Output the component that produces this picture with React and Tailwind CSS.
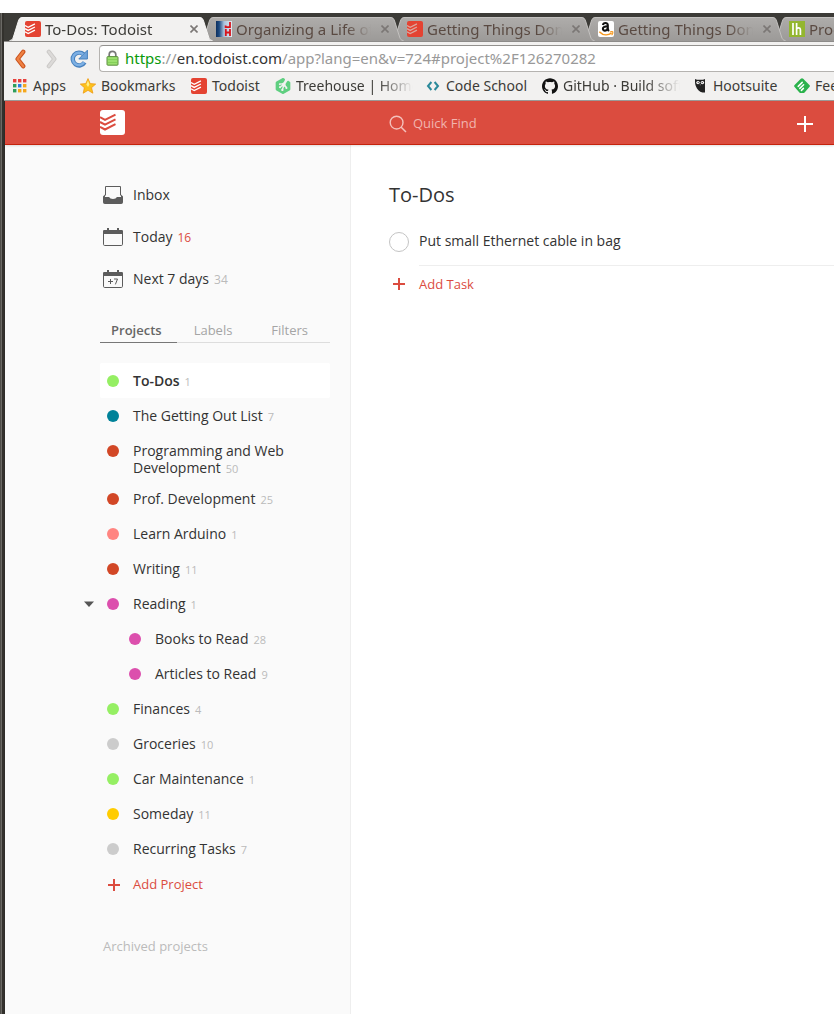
import { SiGithub, SiTreehouse } from "react-icons/si";

function TodoistMark({ className, box, lines, width = 2 }) {
  return (
    <svg viewBox="0 0 25 25" className={className} aria-hidden="true">
      <rect width="25" height="25" rx="3" fill={box} />
      <g fill="none" stroke={lines} strokeWidth={width}>
        <path d="M0 7.2 L5 9.8 L15.5 4.6" />
        <path d="M0 12 L5 14.7 L15.5 9.4" />
        <path d="M0 16.8 L5 19.5 L15.5 14.2" />
      </g>
    </svg>
  );
}

function JhIcon() {
  return (
    <svg viewBox="0 0 16 16" className="size-4 shrink-0" aria-hidden="true">
      <defs>
        <linearGradient id="jh" x1="0" x2="1">
          <stop offset="0" stopColor="#0d2f5f" />
          <stop offset="0.2" stopColor="#1d4a80" />
          <stop offset="0.5" stopColor="#a9c2dc" />
          <stop offset="1" stopColor="#e2e8ef" />
        </linearGradient>
      </defs>
      <rect width="16" height="16" fill="url(#jh)" />
      <g fill="none" stroke="#d8141c" strokeWidth="1.8">
        <path d="M14 1 V6.2 H9.6 V4.6" />
        <path d="M9.8 8 V15 M14 8 V15 M9.8 11.5 H14" />
      </g>
    </svg>
  );
}

function AmazonIcon() {
  return (
    <svg viewBox="0 0 16 16" className="size-4 shrink-0" aria-hidden="true">
      <rect width="16" height="16" rx="2" fill="#fff" />
      <g fill="none" stroke="#111" strokeWidth="2.1">
        <path d="M4.9 4 C5.3 1.4 9.8 1.2 9.8 4.2 V8 C9.8 9 10.2 9.3 11 10" />
        <path d="M9.8 5.2 C7 5.2 4.9 5.8 4.9 7.8 C4.9 10.4 9 10.2 9.8 7.2" />
      </g>
      <path d="M1.3 10.8 C5 14.6 10 14.6 13.6 12.2" fill="none" stroke="#f7981d" strokeWidth="1.5" />
      <path d="M11.8 11 C13.4 10.3 14.8 10.6 14.9 11 C15 12 14.5 13.4 13.6 14.2" fill="none" stroke="#f7981d" strokeWidth="1.1" />
    </svg>
  );
}

function LhIcon() {
  return (
    <svg viewBox="0 0 16 16" className="size-4 shrink-0" aria-hidden="true">
      <rect width="16" height="16" fill="#93b62f" />
      <g fill="none" stroke="#fff" strokeWidth="1.7">
        <path d="M4 2 V14" />
        <path d="M7.6 2 V14 M7.6 8.2 C8.4 6.4 11.4 6.2 11.4 8.8 V14" />
      </g>
    </svg>
  );
}

const TodoistFav = () => <TodoistMark className="size-4 shrink-0" box="#e44332" lines="#fff" />;
const TodoistFavDim = () => <TodoistMark className="size-4 shrink-0" box="#e44332" lines="#dba79f" />;

function CloseIcon() {
  return (
    <svg viewBox="0 0 8 8" className="size-2" aria-hidden="true">
      <path d="M0.5 0.5 L7.5 7.5 M7.5 0.5 L0.5 7.5" stroke="#7b7775" strokeWidth="1.6" />
    </svg>
  );
}

function TabEdge({ active, flip }) {
  return (
    <svg
      viewBox="0 0 14 24"
      className={flip ? "w-[14px] h-6 shrink-0 -scale-x-100" : "w-[14px] h-6 shrink-0"}
      aria-hidden="true"
    >
      <defs>
        <linearGradient id="tabfill" x1="0" x2="0" y1="0" y2="1">
          <stop offset="0" stopColor="#aeacaa" />
          <stop offset="1" stopColor="#9c9a98" />
        </linearGradient>
      </defs>
      <path
        d="M0 24 C3 24 3.6 22 4.4 20 L9.4 4 C10.4 1 11.4 0 14 0 V24 Z"
        fill={active ? "#f2f1f0" : "url(#tabfill)"}
      />
      <path
        d="M0.5 23.5 C3 23.5 3.6 22 4.4 20 L9.4 4 C10.4 1.2 11.4 0.5 14 0.5"
        fill="none"
        stroke={active ? "#f7f6f5" : "#c3c1bf"}
        strokeWidth="1"
      />
    </svg>
  );
}

const tabs = [
  { title: "To-Dos: Todoist", Icon: TodoistFav, active: true, z: "z-50" },
  { title: "Organizing a Life of Productivity", Icon: JhIcon, z: "z-40" },
  { title: "Getting Things Done with Todoist", Icon: TodoistFavDim, z: "z-30" },
  { title: "Getting Things Done: The Art", Icon: AmazonIcon, z: "z-20" },
  { title: "Productivity", Icon: LhIcon, z: "z-10" },
];

function BrowserTab({ title, Icon, active, z }) {
  return (
    <div className={`relative ${z} flex w-[204px] shrink-0 -mr-[13px]`}>
      <TabEdge active={active} />
      <div
        className={
          active
            ? "flex min-w-0 flex-1 items-center border-t border-[#f7f6f5] bg-[#f2f1f0] pb-0.5 pl-0.5 text-[#3c3b37]"
            : "flex min-w-0 flex-1 items-center border-t border-[#c3c1bf] bg-linear-to-b from-[#aeacaa] to-[#9c9a98] pb-0.5 pl-0.5 text-[#5a4a42]"
        }
      >
        <Icon />
        <span className="ml-1 flex-1 overflow-hidden text-[15px] leading-5 whitespace-nowrap [mask-image:linear-gradient(to_right,#000_82%,transparent)]">
          {title}
        </span>
        <button type="button" aria-label={`Close ${title}`} className="ml-2 -mr-px p-0.5">
          <CloseIcon />
        </button>
      </div>
      <TabEdge active={active} flip />
    </div>
  );
}

function AppsIcon() {
  const colors = ["#e8403a", "#e8403a", "#e8403a", "#2e9e5b", "#2b7de1", "#f5a81c", "#2e9e5b", "#f5a81c", "#f5a81c"];
  return (
    <svg viewBox="0 0 16 16" className="size-4 shrink-0" aria-hidden="true">
      {colors.map((c, i) => (
        <rect key={i} x={1 + (i % 3) * 5} y={1 + Math.floor(i / 3) * 5} width="3.4" height="3.4" fill={c} />
      ))}
    </svg>
  );
}

function StarIcon() {
  return (
    <svg viewBox="0 0 16 16" className="size-4 shrink-0" aria-hidden="true">
      <path d="M8 0.6 L10.2 5.6 L15.7 6.1 L11.5 9.7 L12.9 15.2 L8 12.3 L3.2 15.2 L4.4 9.7 L0.3 6.1 L5.8 5.6 Z" fill="#fcc21d" stroke="#f09a12" strokeWidth="0.8" />
      <path d="M8 2.5 L9.4 6.4 L8 9 L6.4 6.4 Z" fill="#fff08a" />
    </svg>
  );
}

const TreehouseIcon = () => <SiTreehouse className="size-4 shrink-0 text-[#5fcf80]" />;
const GithubIcon = () => <SiGithub className="size-4 shrink-0 text-[#111]" />;

function CodeSchoolIcon() {
  return (
    <svg viewBox="0 0 16 16" className="size-4 shrink-0" aria-hidden="true">
      <path d="M6.4 4 L3 8 L6.4 12 M9.6 4 L13 8 L9.6 12" fill="none" stroke="#2a8a9a" strokeWidth="2" />
    </svg>
  );
}

function HootsuiteIcon() {
  return (
    <svg viewBox="0 0 16 16" className="size-4 shrink-0" aria-hidden="true">
      <path d="M3 1 L5 1.8 H11 L13 1 V14.6 C9.5 14.6 6.5 13.2 5 10.4 C3.7 8.4 3 6 3 4 Z" fill="#222" />
      <circle cx="6" cy="4.6" r="1.7" fill="#fff" />
      <circle cx="10.4" cy="4.6" r="1.7" fill="#fff" />
      <circle cx="6.2" cy="4.6" r="0.7" fill="#222" />
      <circle cx="10.2" cy="4.6" r="0.7" fill="#222" />
      <path d="M7.6 6.4 H8.8 L8.2 7.6 Z" fill="#ccc" />
    </svg>
  );
}

function FeedlyIcon() {
  return (
    <svg viewBox="0 0 16 16" className="size-4 shrink-0" aria-hidden="true">
      <path d="M6.8 0.7 Q8 -0.4 9.2 0.7 L15.4 6.9 Q16.4 8 15.4 9.1 L10.6 14.4 Q10 15 9.2 15 H6.8 Q6 15 5.4 14.4 L0.6 9.1 Q-0.4 8 0.6 6.9 Z" fill="#2bb24c" />
      <path d="M4.2 8.4 L8.2 4.4 M5.8 10.4 L9.6 6.8 M7.4 12.4 L9.4 10.4" stroke="#fff" strokeWidth="1.5" strokeLinecap="round" />
    </svg>
  );
}

const bookmarks = [
  { label: "Apps", Icon: AppsIcon, width: "w-[68px]" },
  { label: "Bookmarks", Icon: StarIcon, width: "w-[111px]" },
  { label: "Todoist", Icon: TodoistFav, width: "w-[84px]" },
  { label: "Treehouse | Home", Icon: TreehouseIcon, width: "w-[150px]", fade: true },
  { label: "Code School", Icon: CodeSchoolIcon, width: "w-[117px]" },
  { label: "GitHub · Build software", Icon: GithubIcon, width: "w-[150px]", fade: true },
  { label: "Hootsuite", Icon: HootsuiteIcon, width: "w-[102px]" },
  { label: "Feedly", Icon: FeedlyIcon, width: "w-[84px]" },
];

function BrowserChrome() {
  return (
    <header className="font-['Noto_Sans','Open_Sans',sans-serif]">
      <div className="flex overflow-hidden bg-[#3c3b37] pt-1 pl-[5px]">
        {tabs.map((t, i) => (
          <BrowserTab key={i} {...t} />
        ))}
      </div>
      <div className="border-t border-[#8d8b89] bg-[#f2f1f0]">
        <div className="flex items-center pt-[3px]">
          <button type="button" aria-label="Back" className="ml-2 p-0.5">
            <svg viewBox="0 0 12 20" className="h-5 w-3">
              <path d="M9.2 2.8 L3.6 10 L9.2 17.2" fill="none" stroke="#c9501b" strokeWidth="4.4" strokeLinecap="round" strokeLinejoin="round" />
              <path d="M9.2 2.8 L3.6 10 L9.2 17.2" fill="none" stroke="#ee8143" strokeWidth="2.4" strokeLinecap="round" strokeLinejoin="round" />
            </svg>
          </button>
          <button type="button" aria-label="Forward" className="ml-4 p-0.5">
            <svg viewBox="0 0 12 20" className="h-5 w-3">
              <path d="M2.8 2.8 L8.4 10 L2.8 17.2" fill="none" stroke="#c9c7c5" strokeWidth="4.2" strokeLinecap="round" strokeLinejoin="round" />
              <path d="M2.8 2.8 L8.4 10 L2.8 17.2" fill="none" stroke="#dcdad8" strokeWidth="2.4" strokeLinecap="round" strokeLinejoin="round" />
            </svg>
          </button>
          <button type="button" aria-label="Reload" className="ml-[7px] p-0.5">
            <svg viewBox="0 0 20 20" className="size-5">
              <path d="M14.6 5.4 A6.4 6.4 0 1 0 15.6 13.4" fill="none" stroke="#4780bd" strokeWidth="4.4" />
              <path d="M18.4 1.2 V10 H9.8 Z" fill="#6fa3da" stroke="#4780bd" strokeWidth="1" />
              <path d="M14.2 5.4 A6.2 6.2 0 1 0 15.2 13.2" fill="none" stroke="#7db0e4" strokeWidth="2.4" />
            </svg>
          </button>
          <div className="ml-2 flex h-[27px] flex-1 items-center rounded-l-sm border border-r-0 border-[#b5b3b0] border-t-[#93918e] bg-white pb-0.5 pl-1.5">
            <svg viewBox="0 0 13 16" className="h-4 w-[13px] shrink-0" aria-hidden="true">
              <path d="M3.2 7 V4.6 C3.2 0.2 9.8 0.2 9.8 4.6 V7" fill="none" stroke="#777" strokeWidth="1.7" />
              <rect x="1" y="6.6" width="11" height="8.6" rx="0.8" fill="#9be06e" stroke="#5c8f3f" />
              <path d="M2 9.5 H11 M2 12.5 H11" stroke="#84cf58" strokeWidth="1" />
            </svg>
            <div
              role="textbox"
              aria-label="Address"
              contentEditable
              suppressContentEditableWarning
              className="ml-1.5 flex-1 overflow-hidden text-[15px] leading-6 whitespace-nowrap text-[#999] outline-none"
            >
              <span className="text-[#0a9a0a]">https</span>://
              <span className="text-[#333]">en.todoist.com</span>/app?lang=en&amp;v=724#project%2F126270282
            </div>
          </div>
        </div>
        <nav aria-label="Bookmarks bar" className="flex h-[29px] items-center overflow-hidden border-b border-[#9d9b99] pb-px pl-2">
          {bookmarks.map(({ label, Icon, width, fade }) => (
            <a key={label} href="#" className={`${width} flex shrink-0 items-center gap-[5px] pr-3 text-sm text-[#3c3b37]`}>
              <Icon />
              <span
                className={
                  fade
                    ? "flex-1 overflow-hidden whitespace-nowrap [mask-image:linear-gradient(to_right,#000_70%,transparent)]"
                    : "whitespace-nowrap"
                }
              >
                {label}
              </span>
            </a>
          ))}
        </nav>
      </div>
    </header>
  );
}

function InboxIcon() {
  return (
    <svg viewBox="0 0 20 18" className="h-[18px] w-5 shrink-0" aria-hidden="true">
      <path d="M2.5 9.5 V0.5 H17.5 V9.5" fill="none" stroke="#5c5c5c" />
      <path d="M0 10.6 L2 8.6 V11 H6.2 C6.8 13.6 13.2 13.6 13.8 11 H18 V8.6 L20 10.6 V16.2 Q20 18 18.2 18 H1.8 Q0 18 0 16.2 Z" fill="#5c5c5c" />
    </svg>
  );
}

function CalendarIcon({ week }) {
  return (
    <svg viewBox="0 0 20 18" className="h-[18px] w-5 shrink-0" aria-hidden="true">
      <rect x="0.5" y="2.5" width="19" height="15" rx="1.2" fill="none" stroke="#5c5c5c" />
      <path d="M0 6 V3.4 Q0 2 1.4 2 H18.6 Q20 2 20 3.4 V6 Z M4 0 H6 V3 H4 Z M14 0 H16 V3 H14 Z" fill="#5c5c5c" />
      {week && (
        <path d="M5 11.5 H10 M7.5 9 V14 M11 9 H14.5 L12.4 14.4" fill="none" stroke="#5c5c5c" />
      )}
    </svg>
  );
}

function PlusIcon({ className, weight = 2 }) {
  return (
    <svg viewBox="0 0 12 12" className={className} aria-hidden="true">
      <path d="M0 6 H12 M6 0 V12" stroke="currentColor" strokeWidth={weight} />
    </svg>
  );
}

const views = [
  { label: "Inbox", icon: <InboxIcon /> },
  { label: "Today", icon: <CalendarIcon />, count: 16, color: "text-[#db4c3f]" },
  { label: "Next 7 days", icon: <CalendarIcon week />, count: 34, color: "text-[#bbb]" },
];

const projects = [
  { name: "To-Dos", count: 1, dot: "bg-[#95ef63]", selected: true },
  { name: "The Getting Out List", count: 7, dot: "bg-[#008299]" },
  { name: "Programming and Web Development", count: 50, dot: "bg-[#d24726]" },
  { name: "Prof. Development", count: 25, dot: "bg-[#d24726]" },
  { name: "Learn Arduino", count: 1, dot: "bg-[#ff8581]" },
  { name: "Writing", count: 11, dot: "bg-[#d24726]" },
  { name: "Reading", count: 1, dot: "bg-[#dc4fad]", open: true },
  { name: "Books to Read", count: 28, dot: "bg-[#dc4fad]", nested: true },
  { name: "Articles to Read", count: 9, dot: "bg-[#dc4fad]", nested: true },
  { name: "Finances", count: 4, dot: "bg-[#95ef63]" },
  { name: "Groceries", count: 10, dot: "bg-[#cccccc]" },
  { name: "Car Maintenance", count: 1, dot: "bg-[#95ef63]" },
  { name: "Someday", count: 11, dot: "bg-[#ffcc00]" },
  { name: "Recurring Tasks", count: 7, dot: "bg-[#cccccc]" },
];

function ProjectRow({ name, count, dot, selected, open, nested }) {
  return (
    <li className={selected ? "relative rounded-xs bg-white" : "relative"}>
      {open && (
        <button type="button" aria-label={`Collapse ${name}`} className="absolute top-3.5 -left-4">
          <svg viewBox="0 0 10 8" className="h-2 w-2.5">
            <path d="M0 1.5 H10 L5 7 Z" fill="#555" />
          </svg>
        </button>
      )}
      <a
        href="#"
        className={
          nested
            ? "flex min-h-[35px] pt-[9px] pr-8 pb-[5px] pl-[29px]"
            : "flex min-h-[35px] pt-[9px] pr-8 pb-[5px] pl-[7px]"
        }
      >
        <span className={`${dot} mt-[3px] mr-3.5 size-3 shrink-0 rounded-full`} />
        <span className="leading-[17px]">
          <span className={selected ? "font-semibold" : ""}>{name}</span>
          <span className="ml-[5px] text-[11px] leading-none text-[#bbb]">{count}</span>
        </span>
      </a>
    </li>
  );
}

function Sidebar() {
  return (
    <aside className="w-[346px] shrink-0 border-r border-[#eee] bg-[#fafafa] pt-[29px] pr-5 pl-[95px]">
      <nav aria-label="Views">
        {views.map((v) => (
          <a key={v.label} href="#" className="flex h-[42px] items-center pl-[3px]">
            {v.icon}
            <span className="ml-2.5">
              {v.label}
              {v.count && <span className={`${v.color} ml-[5px] text-xs`}>{v.count}</span>}
            </span>
          </a>
        ))}
      </nav>
      <div role="tablist" className="mt-5 flex text-[13px] leading-5 text-[#a5a5a5]">
        <button type="button" role="tab" aria-selected="true" className="flex-1 border-b border-[#777] pr-1 pb-0.5 font-semibold text-[#666]">
          Projects
        </button>
        <button type="button" role="tab" aria-selected="false" className="flex-1 border-b border-[#ddd] pr-1 pb-0.5">
          Labels
        </button>
        <button type="button" role="tab" aria-selected="false" className="flex-1 border-b border-[#ddd] pr-1 pb-0.5">
          Filters
        </button>
      </div>
      <ul className="mt-5">
        {projects.map((p) => (
          <ProjectRow key={p.name} {...p} />
        ))}
      </ul>
      <button type="button" className="flex h-[37px] items-center pl-2 text-[13px] text-[#db4c3f]">
        <PlusIcon className="mr-[13px] size-3" />
        Add Project
      </button>
      <a href="#" className="mt-[33px] mb-12 block pl-[3px] text-[13px] leading-5 text-[#bbb]">
        Archived projects
      </a>
    </aside>
  );
}

function TopBar() {
  return (
    <div className="relative z-10 flex h-11 items-center border-b border-[#c5230c] bg-[#db4c3f] shadow-[0_1px_2px_rgba(0,0,0,0.12)]">
      <a href="#" aria-label="Todoist home" className="w-[346px] shrink-0 pl-[95px]">
        <TodoistMark className="size-[25px]" box="#fff" lines="#db4c3f" />
      </a>
      <label className="flex flex-1 items-center pt-0.5 pl-[38px]">
        <svg viewBox="0 0 18 18" className="size-[18px] text-[#f4c1bc]" aria-hidden="true">
          <circle cx="7.6" cy="7.6" r="6.4" fill="none" stroke="currentColor" strokeWidth="1.4" />
          <path d="M12.2 12.2 L17 17" stroke="currentColor" strokeWidth="1.5" />
        </svg>
        <input
          type="search"
          aria-label="Quick Find"
          placeholder="Quick Find"
          className="ml-1.5 min-w-0 flex-1 bg-transparent text-[13px] text-white outline-none placeholder:text-[#f1b5af]"
        />
      </label>
      <button type="button" aria-label="Add" className="mr-[21px] pt-0.5 text-white">
        <PlusIcon className="size-4" weight={1.5} />
      </button>
    </div>
  );
}

function TaskList() {
  return (
    <main className="min-w-0 flex-1 bg-white pt-9 pl-[38px]">
      <h1 className="text-xl leading-7">To-Dos</h1>
      <label className="mt-[14px] flex h-[43px] items-start">
        <input type="checkbox" className="mt-[9px] size-5 shrink-0 appearance-none rounded-full border border-[#c4c4c4]" />
        <span className="ml-2.5 h-full flex-1 border-b border-[#eee] pt-2 leading-5">Put small Ethernet cable in bag</span>
      </label>
      <button type="button" className="flex h-9 items-center pl-1 text-[13px] text-[#db4c3f]">
        <PlusIcon className="mr-3.5 size-3" />
        Add Task
      </button>
    </main>
  );
}

export default function App() {
  return (
    <div className="flex min-h-screen flex-col bg-white pt-[13px]">
      <div className="flex flex-1 bg-[#3c3b37]">
        <div className="w-1 shrink-0 border-r-2 border-l border-r-[#33312d] border-l-[#4f4d49] bg-[#6b6965]" />
        <div className="flex min-w-0 flex-1 flex-col">
          <BrowserChrome />
          <div className="flex flex-1 flex-col border-l border-[#2f2d2a] font-['Open_Sans',sans-serif] text-sm text-[#333]">
            <TopBar />
            <div className="flex flex-1">
              <Sidebar />
              <TaskList />
            </div>
          </div>
        </div>
      </div>
    </div>
  );
}
